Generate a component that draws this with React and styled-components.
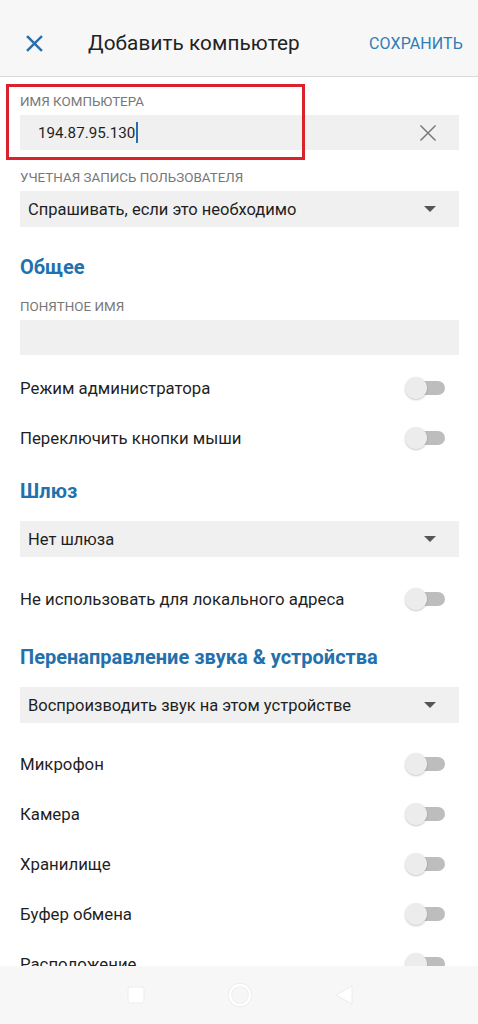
import React from "react";
import styled, { createGlobalStyle } from "styled-components";

const Global = createGlobalStyle`
  html, body { margin: 0; padding: 0; background: #fff; }
  body { font-family: Roboto, "Noto Sans", "Liberation Sans", sans-serif; color: #1f1f1f; }
  * { box-sizing: border-box; }
`;

const Screen = styled.div`
  width: 478px;
  height: 1024px;
  display: flex;
  flex-direction: column;
  background: #fff;
  overflow: hidden;
`;

const Header = styled.header`
  height: 77px;
  flex: none;
  background: #f7f7f7;
  border-bottom: 1px solid #dadada;
  display: flex;
  align-items: center;
  padding: 10px 15px 0 25px;
`;

const IconButton = styled.button`
  border: 0;
  background: none;
  padding: 0;
  width: 18px;
  height: 18px;
  display: flex;
  align-items: center;
  justify-content: center;
`;

const Title = styled.h1`
  margin: 0 0 0 45px;
  font-size: 20.7px;
  font-weight: 400;
  color: #222;
  flex: 1;
  letter-spacing: 0.1px;
`;

const Save = styled.span`
  font-size: 16px;
  color: #2f7db8;
  letter-spacing: 0.1px;
`;

const Content = styled.main`
  flex: 1;
  overflow: hidden;
  padding: 0 19px 0 20px;
  display: flex;
  flex-direction: column;
`;

const FieldGroup = styled.div`
  position: relative;
  margin-top: ${(p) => p.$top}px;
`;

const Highlight = styled.div`
  position: absolute;
  left: -14px;
  top: -10px;
  width: 299px;
  height: 76px;
  border: 3px solid #d9222c;
  pointer-events: none;
`;

const Label = styled.div`
  font-size: 13.4px;
  line-height: 16px;
  color: #777;
  text-transform: uppercase;
  margin-bottom: 5px;
`;

const InputBox = styled.div`
  height: ${(p) => p.$h || 35}px;
  background: #f0f0f0;
  display: flex;
  align-items: center;
  padding: 0 22px 0 ${(p) => p.$pl || 18}px;
  font-size: ${(p) => p.$fs || 16.5}px;
`;

const InputText = styled.span`
  color: #1f1f1f;
  flex: 1;
  display: flex;
  align-items: center;
`;

const Caret = styled.span`
  display: inline-block;
  width: 2px;
  height: 21px;
  background: #2a6eb0;
  margin-left: 1px;
`;

const Arrow = styled.span`
  width: 0;
  height: 0;
  border-left: 6px solid transparent;
  border-right: 6px solid transparent;
  border-top: 6px solid #555;
  margin-right: 1px;
`;

const Heading = styled.h2`
  margin: ${(p) => p.$top}px 0 0;
  font-size: 20px;
  line-height: 24px;
  font-weight: 700;
  color: #2370ad;
`;

const ToggleRow = styled.div`
  height: 50px;
  flex: none;
  display: flex;
  align-items: center;
  justify-content: space-between;
  font-size: 16.8px;
  margin-top: ${(p) => p.$top || 0}px;
  padding-right: 14px;
`;

const Switch = styled.span`
  position: relative;
  width: 40px;
  height: 22px;
  display: block;
`;

const Track = styled.span`
  position: absolute;
  left: 9px;
  right: 0;
  top: 4px;
  height: 14px;
  border-radius: 7px;
  background: #bdbdbd;
`;

const Thumb = styled.span`
  position: absolute;
  left: 0;
  top: 0;
  width: 22px;
  height: 22px;
  border-radius: 50%;
  background: #ececec;
  box-shadow: 0 1px 2px rgba(0, 0, 0, 0.22);
`;

const NavBar = styled.nav`
  height: 58px;
  flex: none;
  background: #f7f7f7;
  display: flex;
  align-items: center;
  justify-content: center;
  gap: 78px;
  padding-left: 2px;
`;

const NavIcon = styled.svg`
  width: 26px;
  height: 26px;
  display: block;
`;

const Toggle = () => (
  <Switch>
    <Track />
    <Thumb />
  </Switch>
);

const CloseIcon = ({ color, width, size }) => (
  <svg width={size} height={size} viewBox="0 0 18 18">
    <path d="M2 2 L16 16 M16 2 L2 16" stroke={color} strokeWidth={width} strokeLinecap="square" />
  </svg>
);

const Select = ({ children }) => (
  <InputBox $pl={8} $h={36}>
    <InputText>{children}</InputText>
    <Arrow />
  </InputBox>
);

export default function App() {
  return (
    <>
      <Global />
      <Screen>
        <Header>
          <IconButton aria-label="close">
            <CloseIcon color="#2b6ea8" width={2.6} size={17} />
          </IconButton>
          <Title>Добавить компьютер</Title>
          <Save>СОХРАНИТЬ</Save>
        </Header>
        <Content>
          <FieldGroup $top={17}>
            <Highlight />
            <Label>Имя компьютера</Label>
            <InputBox $fs={15.2}>
              <InputText>
                194.87.95.130
                <Caret />
              </InputText>
              <CloseIcon color="#7a7a7a" width={1.5} size={18} />
            </InputBox>
          </FieldGroup>
          <FieldGroup $top={20}>
            <Label>Учетная запись пользователя</Label>
            <Select>Спрашивать, если это необходимо</Select>
          </FieldGroup>

          <Heading $top={28}>Общее</Heading>
          <FieldGroup $top={20}>
            <Label>Понятное имя</Label>
            <InputBox />
          </FieldGroup>
          <ToggleRow $top={8}>
            Режим администратора
            <Toggle />
          </ToggleRow>
          <ToggleRow>
            Переключить кнопки мыши
            <Toggle />
          </ToggleRow>

          <Heading $top={16}>Шлюз</Heading>
          <FieldGroup $top={18}>
            <Select>Нет шлюза</Select>
          </FieldGroup>
          <ToggleRow $top={17}>
            Не использовать для локального адреса
            <Toggle />
          </ToggleRow>

          <Heading $top={21}>Перенаправление звука &amp; устройства</Heading>
          <FieldGroup $top={18}>
            <Select>Воспроизводить звук на этом устройстве</Select>
          </FieldGroup>
          <ToggleRow $top={16}>
            Микрофон
            <Toggle />
          </ToggleRow>
          <ToggleRow>
            Камера
            <Toggle />
          </ToggleRow>
          <ToggleRow>
            Хранилище
            <Toggle />
          </ToggleRow>
          <ToggleRow>
            Буфер обмена
            <Toggle />
          </ToggleRow>
          <ToggleRow>
            Расположение
            <Toggle />
          </ToggleRow>
        </Content>
        <NavBar>
          <NavIcon viewBox="0 0 26 26">
            <rect x="5" y="5" width="16" height="16" rx="2" fill="#fff" stroke="#ececec" strokeWidth="1" />
          </NavIcon>
          <NavIcon viewBox="0 0 26 26">
            <circle cx="13" cy="13" r="10" fill="none" stroke="#e9e9e9" strokeWidth="4" />
            <circle cx="13" cy="13" r="10" fill="none" stroke="#fff" strokeWidth="2.5" />
          </NavIcon>
          <NavIcon viewBox="0 0 26 26">
            <path d="M5 13 L21 4 L21 22 Z" fill="#fff" stroke="#ececec" strokeWidth="1" strokeLinejoin="round" />
          </NavIcon>
        </NavBar>
      </Screen>
    </>
  );
}
